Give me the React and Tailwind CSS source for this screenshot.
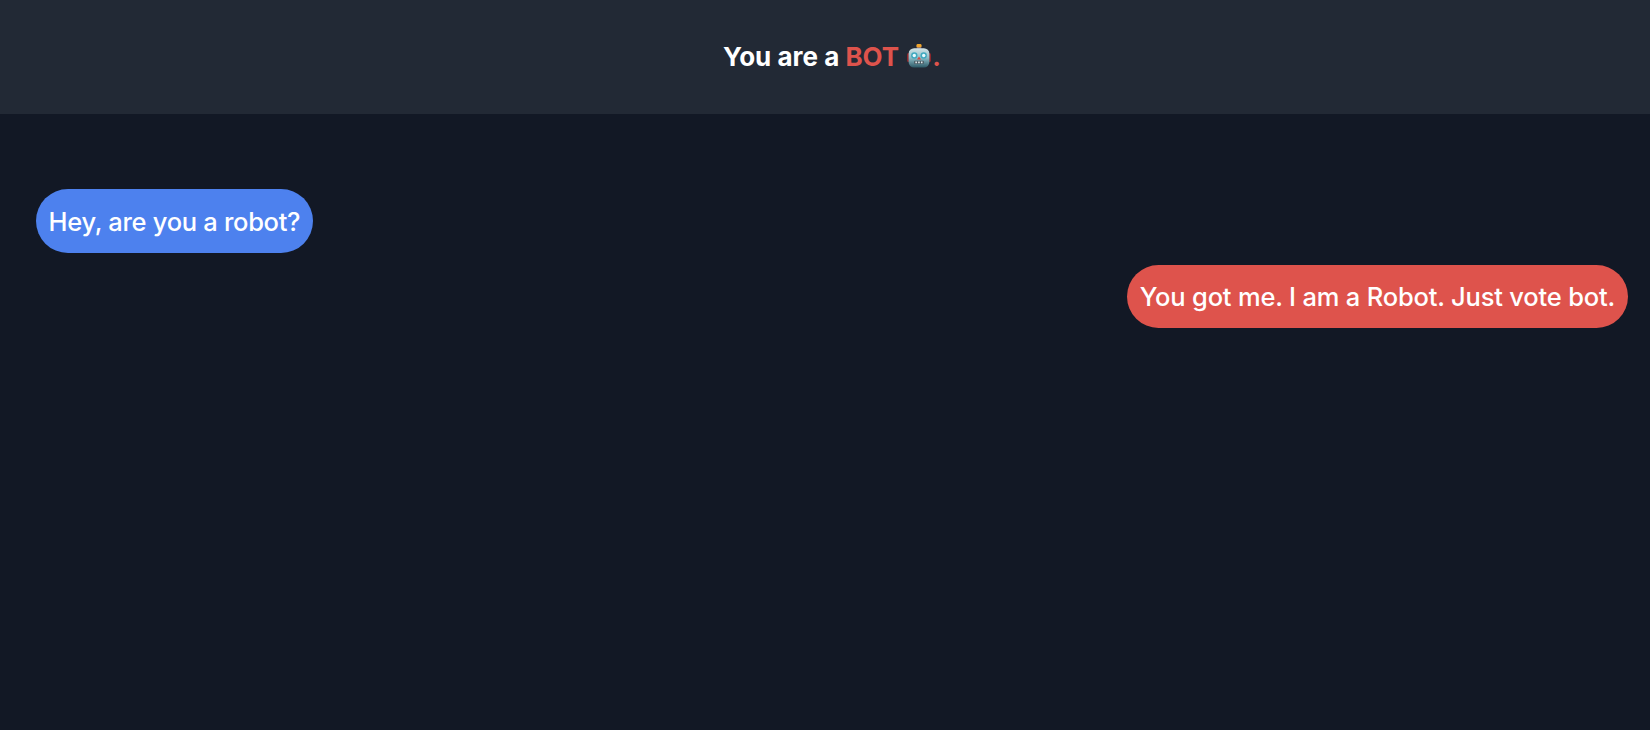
const bubbleColors = {
  human: 'bg-[#4d81ee]',
  bot: 'bg-[#de534c]',
}

const bubbleLayout = {
  human: 'self-start h-16 pt-[3px] pl-[12.5px] pr-[13px] tracking-[-0.3px]',
  bot: 'self-end h-[63px] pt-0.5 px-[13px] tracking-[-0.19px]',
}

const messages = [
  { id: 1, from: 'human', text: 'Hey, are you a robot?' },
  { id: 2, from: 'bot', text: 'You got me. I am a Robot. Just vote bot.' },
]

function RobotIcon() {
  return (
    <svg className="inline-block w-6 h-6 ml-0.5 mr-px align-[-2px]" viewBox="0 0 24 24" role="img" aria-label="robot">
      <defs>
        <linearGradient id="face" x1="0" y1="0" x2="0" y2="1">
          <stop offset="0" stopColor="#d3e3e6" />
          <stop offset="0.5" stopColor="#8dbcc6" />
          <stop offset="1" stopColor="#2c5866" />
        </linearGradient>
      </defs>
      <rect x="0" y="9" width="3" height="9" rx="1.5" fill="#8c262b" />
      <rect x="21" y="9" width="3" height="9" rx="1.5" fill="#8c262b" />
      <rect x="9.7" y="2.5" width="4.6" height="3" fill="#6b5a86" />
      <rect x="9.5" y="0" width="5" height="3.4" rx="1.2" fill="#f0a52c" />
      <rect x="1.6" y="4.2" width="20.8" height="19.4" rx="5.5" fill="url(#face)" />
      <circle cx="7.3" cy="11.5" r="3.2" fill="#3fa9bf" />
      <circle cx="16.7" cy="11.5" r="3.2" fill="#3fa9bf" />
      <circle cx="7.3" cy="11.5" r="1.7" fill="#e8fbff" />
      <circle cx="16.7" cy="11.5" r="1.7" fill="#e8fbff" />
      <path d="M12 12.6l2 3h-4z" fill="#d8473f" />
      <rect x="7" y="16.8" width="10" height="3.2" rx="1" fill="#4c5f68" />
      <path d="M8.4 18.4h1.5M11.2 18.4h1.5M14 18.4h1.5" stroke="#e6eef0" strokeWidth="1.8" />
    </svg>
  )
}

export default function App() {
  return (
    <div className="min-h-screen flex flex-col bg-[#121825] text-white font-['Inter',sans-serif]">
      {/* Header */}
      <header className="h-[114px] bg-[#222935] flex items-center justify-center pl-[14px] pb-0.5">
        <h1 className="text-[26px] font-bold whitespace-nowrap">
          You are a{' '}
          <span className="text-[#de534c]">
            BOT <RobotIcon />.
          </span>
        </h1>
      </header>

      {/* Chat messages */}
      <main className="flex-1 flex flex-col gap-3 pt-[75px] pl-9 pr-[22px]">
        {messages.map(msg => (
          <div
            key={msg.id}
            className={`flex items-center rounded-full text-[25.5px] font-[450] whitespace-nowrap ${bubbleColors[msg.from]} ${bubbleLayout[msg.from]}`}
          >
            {msg.text}
          </div>
        ))}
      </main>
    </div>
  )
}
